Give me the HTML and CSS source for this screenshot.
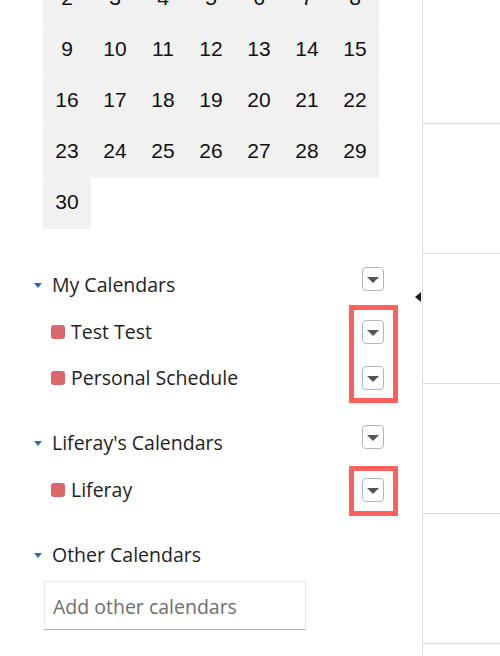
FILE: index.html
```html
<!DOCTYPE html>
<html lang="en">
<head>
<meta charset="utf-8">
<title>Calendar</title>
<link rel="stylesheet" href="styles.css">
</head>
<body>
<div class="page">
  <aside class="sidebar">
    <div class="mini-cal">
      <span class="day">2</span><span class="day">3</span><span class="day">4</span><span class="day">5</span><span class="day">6</span><span class="day">7</span><span class="day">8</span>
      <span class="day">9</span><span class="day">10</span><span class="day">11</span><span class="day">12</span><span class="day">13</span><span class="day">14</span><span class="day">15</span>
      <span class="day">16</span><span class="day">17</span><span class="day">18</span><span class="day">19</span><span class="day">20</span><span class="day">21</span><span class="day">22</span>
      <span class="day">23</span><span class="day">24</span><span class="day">25</span><span class="day">26</span><span class="day">27</span><span class="day">28</span><span class="day">29</span>
      <span class="day">30</span>
    </div>

    <div class="cal-list">
      <div class="group">
        <div class="row header">
          <span class="label"><span class="caret"></span>My Calendars</span>
          <button class="menu-btn top"><span class="arrow"></span></button>
        </div>
        <div class="row item">
          <span class="label"><span class="swatch"></span>Test Test</span>
          <button class="menu-btn"><span class="arrow"></span></button>
        </div>
        <div class="row item">
          <span class="label"><span class="swatch"></span>Personal Schedule</span>
          <button class="menu-btn"><span class="arrow"></span></button>
        </div>
      </div>

      <div class="group">
        <div class="row header">
          <span class="label"><span class="caret"></span>Liferay's Calendars</span>
          <button class="menu-btn top"><span class="arrow"></span></button>
        </div>
        <div class="row item">
          <span class="label"><span class="swatch"></span>Liferay</span>
          <button class="menu-btn"><span class="arrow"></span></button>
        </div>
      </div>

      <div class="group">
        <div class="row header">
          <span class="label"><span class="caret"></span>Other Calendars</span>
        </div>
        <input class="add-input" type="text" placeholder="Add other calendars">
      </div>
    </div>
  </aside>

  <main class="main">
    <div class="slot first"></div>
    <div class="slot"></div>
    <div class="slot"></div>
    <div class="slot"></div>
    <div class="slot"></div>
  </main>

  <span class="collapse-arrow"></span>
  <div class="highlight hl-1"></div>
  <div class="highlight hl-2"></div>
</div>
</body>
</html>
```

FILE: styles.css
```css
html, body {
  margin: 0;
  padding: 0;
  height: 100%;
  background: #fff;
  overflow: hidden;
}

.page {
  position: relative;
  display: flex;
  height: 656px;
  font-family: "Open Sans", "Noto Sans", sans-serif;
  color: #1e1e1e;
}

.sidebar {
  width: 422px;
  flex: 0 0 422px;
  border-right: 1px solid #dcdcdc;
}

.mini-cal {
  margin: -26px 0 0 43px;
  width: 336px;
  display: grid;
  grid-template-columns: repeat(7, 48px);
  grid-auto-rows: 51px;
}

.day {
  display: flex;
  align-items: center;
  justify-content: center;
  background: #f1f1f1;
  border-radius: 2px;
  font-family: "Liberation Sans", Arial, sans-serif;
  font-size: 21px;
  color: #111;
  padding-bottom: 3px;
  box-sizing: border-box;
}

.cal-list {
  margin: 33px 0 0 34px;
  width: 350px;
}

.group + .group {
  margin-top: 19px;
}

.row {
  display: flex;
  justify-content: space-between;
  align-items: center;
  height: 46px;
}

.group .header + .item {
  margin-top: 1px;
}

.label {
  display: flex;
  align-items: center;
  font-size: 19.5px;
  line-height: 1;
  white-space: nowrap;
}

.caret {
  width: 0;
  height: 0;
  border-left: 4px solid transparent;
  border-right: 4px solid transparent;
  border-top: 5px solid #2d6cb3;
  margin-right: 10px;
}

.swatch {
  width: 14px;
  height: 14px;
  border-radius: 3px;
  background: #da676b;
  margin: 0 6px 0 17px;
}

.menu-btn {
  width: 22px;
  height: 24px;
  padding: 0;
  border: 1px solid #b4b4b4;
  border-radius: 4px;
  background: #fff;
  display: flex;
  align-items: center;
  justify-content: center;
  box-sizing: border-box;
}

.menu-btn.top {
  align-self: flex-start;
  margin-top: 5px;
}

.arrow {
  width: 0;
  height: 0;
  border-left: 6px solid transparent;
  border-right: 6px solid transparent;
  border-top: 6px solid #555;
  margin-top: 1px;
}

.add-input {
  display: block;
  margin: 3px 0 0 10px;
  width: 262px;
  height: 49px;
  box-sizing: border-box;
  border: 1px solid #e6e6e6;
  border-bottom-color: #b2b2b2;
  padding: 2px 8px 0;
  font-family: "Open Sans", "Noto Sans", sans-serif;
  font-size: 19.5px;
  color: #222;
  outline: none;
}

.add-input::placeholder {
  color: #6e6e6e;
}

.main {
  flex: 1;
  display: flex;
  flex-direction: column;
}

.slot {
  height: 130px;
  flex: 0 0 130px;
  box-sizing: border-box;
  border-bottom: 1px solid #dcdcdc;
}

.slot.first {
  height: 124px;
  flex: 0 0 124px;
}

.collapse-arrow {
  position: absolute;
  left: 415px;
  top: 292px;
  width: 0;
  height: 0;
  border-top: 5px solid transparent;
  border-bottom: 5px solid transparent;
  border-right: 6px solid #1c1c1c;
}

.highlight {
  position: absolute;
  border: 5px solid #ff5f5f;
  box-sizing: border-box;
}

.hl-1 {
  left: 349px;
  top: 305px;
  width: 49px;
  height: 98px;
}

.hl-2 {
  left: 349px;
  top: 466px;
  width: 49px;
  height: 50px;
}
```
